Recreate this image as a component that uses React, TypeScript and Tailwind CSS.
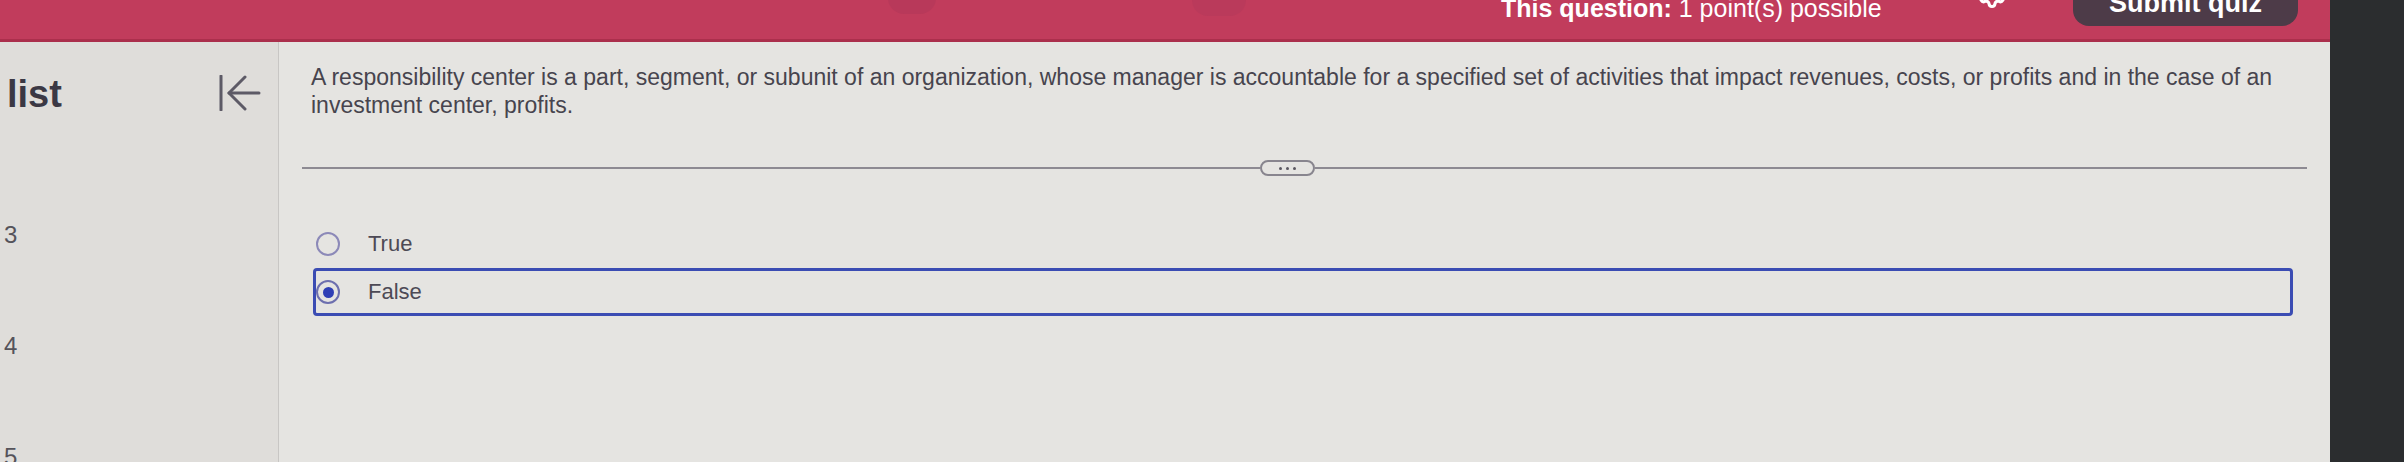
import { Settings } from "lucide-react";

const font = "font-['Liberation_Sans','Arial',sans-serif]";

function Radio({ checked }: { checked?: boolean }) {
  if (checked) {
    return (
      <span className="flex h-[24px] w-[24px] shrink-0 items-center justify-center rounded-full border-[2.5px] border-[#6d6fae]">
        <span className="h-[11px] w-[11px] rounded-full bg-[#2f3fb5]" />
      </span>
    );
  }
  return (
    <span className="h-[24px] w-[24px] shrink-0 rounded-full border-[2.5px] border-[#8c89b8]" />
  );
}

function Option({ label, checked }: { label: string; checked?: boolean }) {
  return (
    <div
      className={
        "flex h-[48px] items-center rounded-[4px] border-[3px] " +
        (checked ? "border-[#3b4cb3]" : "border-transparent")
      }
    >
      <Radio checked={checked} />
      <span className="ml-[28px] text-[22px] leading-[24px] text-[#4d4a55]">{label}</span>
    </div>
  );
}

export default function App() {
  return (
    <div className={`flex h-[462px] w-[2404px] overflow-hidden bg-[#2b2d2f] ${font}`}>
      <div className="flex w-[2330px] flex-col">
        {/* top bar */}
        <header className="flex h-[42px] shrink-0 items-start border-b-[3px] border-[#ab2f4c] bg-[#c13c5c] text-white">
          <div className="flex w-[1501px] items-start">
            <div className="-mt-[18px] ml-[888px] h-[32px] w-[48px] rounded-full bg-[#b8395a]" />
            <div className="-mt-[16px] ml-[256px] h-[32px] w-[54px] rounded-full bg-[#ba3a5b]" />
          </div>
          <div className="-mt-[4px] w-[476px] whitespace-nowrap text-[25px] leading-[25px]">
            <span className="font-bold">This question:</span> 1 point(s) possible
          </div>
          <div className="w-[96px]">
            <Settings size={30} strokeWidth={2.5} className="-mt-[21px] text-white" />
          </div>
          <div className="flex h-[26px] w-[225px] items-start justify-center rounded-b-[16px] bg-[#4d3b48]">
            <span className="-mt-[10px] whitespace-nowrap text-[27px] font-bold leading-[27px]">
              Submit quiz
            </span>
          </div>
        </header>

        <div className="flex flex-1">
          {/* left list panel */}
          <aside className="flex w-[279px] shrink-0 flex-col border-r border-[#c8c6c4] bg-[#dfddda] pt-[33px]">
            <div className="flex items-start">
              <div className="w-[218px] pl-[7px] text-[38px] font-bold leading-[38px] text-[#3b3844]">
                list
              </div>
              <svg width="44" height="36" viewBox="0 0 44 36" fill="none" stroke="#5d5a66" strokeWidth="3" strokeLinecap="round" strokeLinejoin="round">
                <path d="M3 1v34" />
                <path d="M27 2 11 18l16 16" />
                <path d="M11 18h30" />
              </svg>
            </div>
            <div className="mt-[110px] flex flex-col gap-[87px] pl-[4px] text-[24px] leading-[24px] text-[#55535a]">
              <span>3</span>
              <span>4</span>
              <span>5</span>
            </div>
          </aside>

          {/* question */}
          <main className="flex flex-1 flex-col bg-[#e5e4e1] px-[23px] pt-[21px]">
            <p className="pl-[9px] pr-[18px] text-[23px] leading-[28px] text-[#47444e]">
              A responsibility center is a part, segment, or subunit of an organization, whose manager is accountable for a specified set of activities that impact revenues, costs, or profits and in the case of an investment center, profits.
            </p>

            <div className="mt-[41px] flex items-center">
              <div className="h-[2px] w-[958px] bg-[#8d8a92]" />
              <button className="flex h-[16px] w-[55px] items-center justify-center gap-[4px] rounded-full border-2 border-[#88858e]">
                <span className="h-[3px] w-[3px] rounded-full bg-[#5a5760]" />
                <span className="h-[3px] w-[3px] rounded-full bg-[#5a5760]" />
                <span className="h-[3px] w-[3px] rounded-full bg-[#5a5760]" />
              </button>
              <div className="h-[2px] flex-1 bg-[#8d8a92]" />
            </div>

            <div className="ml-[11px] mr-[14px] mt-[44px] flex flex-col">
              <Option label="True" />
              <Option label="False" checked />
            </div>
          </main>
        </div>
      </div>
    </div>
  );
}
